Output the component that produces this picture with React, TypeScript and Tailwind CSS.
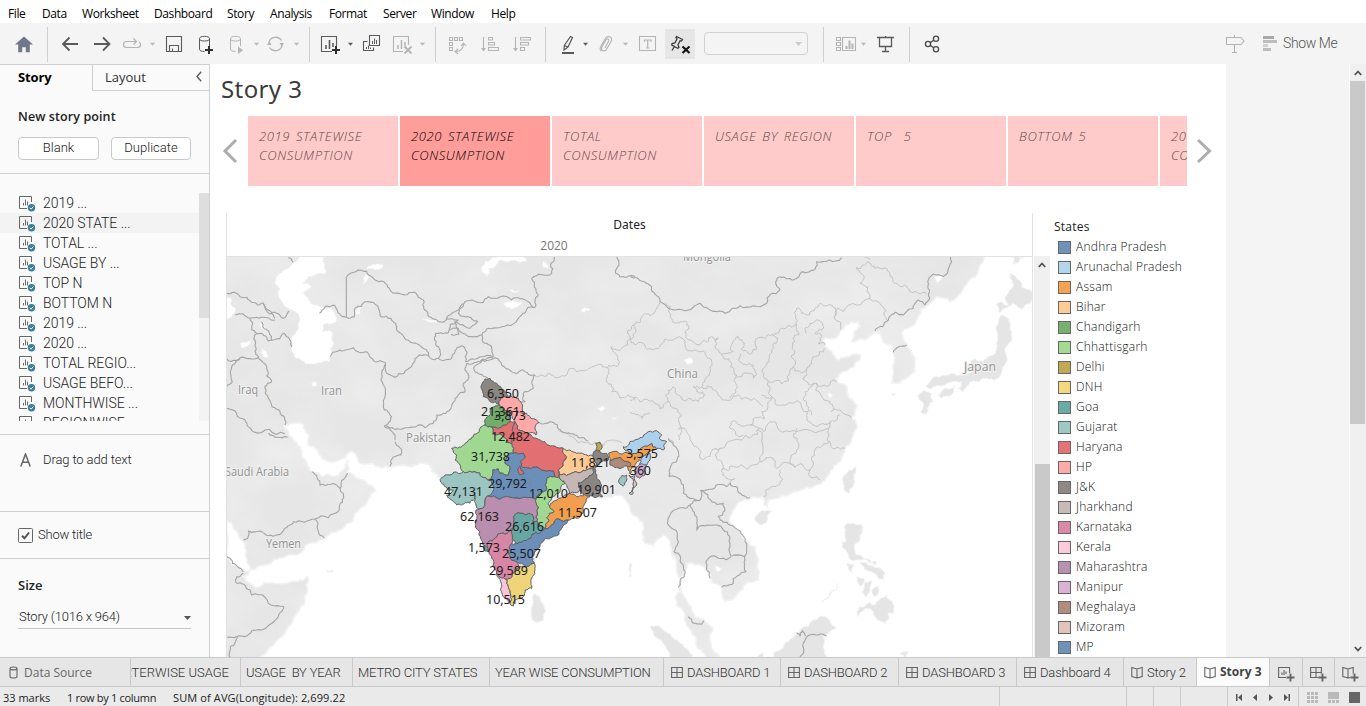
import React from "react";

/* ---------- geometry helpers ---------- */
type Pt = [number, number];

const parse = (s: string, dx = 0, dy = 0): Pt[] =>
  s.trim().split(/\s+/).map((p) => {
    const [x, y] = p.split(",").map(Number);
    return [x + dx, y + dy] as Pt;
  });

const hash = (x: number, y: number) => {
  const v = Math.sin(x * 12.9898 + y * 78.233) * 43758.5453;
  return v - Math.floor(v) - 0.5;
};

// Midpoint displacement; the offset depends only on the segment, so shared edges agree.
const split = (a: Pt, b: Pt, depth: number, amp: number): Pt[] => {
  const len = Math.hypot(b[0] - a[0], b[1] - a[1]);
  if (depth === 0 || len < 7 || len > 250) return [b];
  const flip = a[0] > b[0] || (a[0] === b[0] && a[1] > b[1]);
  const [p, q] = flip ? [b, a] : [a, b];
  const k = hash(p[0] + q[0], p[1] + q[1]) * amp;
  const m: Pt = [(a[0] + b[0]) / 2 - (q[1] - p[1]) * k, (a[1] + b[1]) / 2 + (q[0] - p[0]) * k];
  return [...split(a, m, depth - 1, amp), ...split(m, b, depth - 1, amp)];
};

const trace = (pts: Pt[], close: boolean, amp = 0.5) => {
  const src = close ? [...pts, pts[0]] : pts;
  let out: Pt[] = [src[0]];
  for (let i = 1; i < src.length; i++) out = out.concat(split(src[i - 1], src[i], 3, amp));
  return "M" + out.map((p) => p[0].toFixed(1) + " " + p[1].toFixed(1)).join("L") + (close ? "Z" : "");
};

/* ---------- map data (thirds of a pixel) ---------- */
const E = 1215;
const S = 675;

const ocean: Pt[] = [
  ...parse("0,265 5,272 40,312 60,345 62,380 75,418 90,418 130,402 180,380 240,350 300,325 345,300 385,270 405,235 430,210 452,183 425,160 400,145 365,125 372,115 368,90 355,120 340,137 290,140 260,125 245,95 225,50 205,30 185,-2 178,-12 200,-20 235,-15 240,0 250,45 290,85 330,95 360,85 375,65 390,70 400,95 440,100 495,110 545,108 610,102 620,125 640,140 650,150 680,200 710,222 750,200 755,230 765,300 790,360 820,440 845,510 865,527 885,510 920,470 930,400 925,350 980,300 1040,260 1090,210 1100,195 1130,203 1180,195 1195,200 1205,215", 0, S),
  ...parse("0,235 25,265 40,290 45,340 70,345 100,315 120,345 140,400 140,420 150,480 135,500 140,525 165,560 185,610 200,650 240,700 272,700 250,600 225,575 195,560 175,520 150,475 155,440 170,400 200,405 230,420 245,455 275,475 285,515 325,490 385,450 385,390 375,350 335,310 300,275 310,240 330,215 360,205 400,200 402,225 412,230 415,210 440,205 500,185 560,165 600,125 630,95 645,60 670,15", E, S),
  ...parse("682,665 665,640 675,620 680,600 655,570 650,545 620,520 640,500 690,465 690,450 650,455 625,465 600,435 585,420 583,400 610,400 635,375 665,350 685,350 690,365 670,400 665,410 735,380 750,385 755,400 765,415 785,420 790,445 790,500 785,535 830,520 855,500 855,465 845,440 830,415 815,385 860,345 870,310 920,275 960,290 1000,250 1045,200 1065,145 1230,145", E, 0),
  [E + 1230, S + 730],
  ...parse("80,730 100,682 150,640 190,590 215,550 245,490 248,440 200,455 150,462 90,473 65,455 55,440 75,422 55,420 0,376", 0, S),
];

const lakes = [
  "230,150 300,150 298,185 300,208 275,208 232,235 260,243 235,262 250,285 275,300 320,308 335,345 295,358 292,380 320,378 318,450 312,470 265,477 225,462 200,430 205,390 225,345 190,310 165,250 150,235 165,205 200,180",
  "0,278 20,285 32,315 20,335 0,342",
  "770,185 800,158 900,158 905,168 830,165 790,190 785,215 770,200",
  "835,298 890,290 860,312", "415,235 425,205 430,210 420,235", "425,193 440,180 475,183 450,195",
  "395,315 408,305 406,325 394,328", "593,343 615,345 640,352 612,350", "855,252 882,258 860,260",
  "955,168 970,180 975,195 957,188", "1068,318 1080,308 1095,315 1078,322", "110,430 125,440 130,458 116,455",
  "45,415 78,405 70,420 50,428", "260,535 270,528 276,540 266,545", "105,355 120,365 128,376 112,370",
  "1120,610 1130,602 1140,612 1130,620", "1378,465 1395,458 1405,470 1390,478", "2130,215 2150,210 2148,225 2138,235",
  "1160,638 1180,636 1168,645", "1808,565 1825,570 1815,580", "1470,1080 1490,1092 1480,1100",
];

const islands: Pt[][] = [
  parse("925,490 945,500 962,540 955,570 930,575 918,540", 0, S),
  parse("305,422 325,420 322,426 308,427", 0, S),
  parse("376,260 395,242 427,243 410,275 390,283 375,272", E, S),
  parse("640,155 655,120 678,110 672,150 655,190", E, S),
  parse("652,280 692,282 690,330 672,352 680,375 710,390 740,395 738,405 690,390 665,392 636,350 636,335 648,335", E, S),
  parse("650,402 672,405 665,428", E, S),
  parse("680,440 705,450 690,470", E, S),
  parse("690,398 715,405 765,430 762,455 745,445 725,425", E, S),
  parse("705,455 725,450 720,480 710,500 695,485", E, S),
  parse("725,480 745,470 735,500", E, S),
  parse("683,560 690,530 715,518 735,525 745,510 770,495 788,520 790,550 775,548 765,582 740,570 730,545 710,535", E, S),
  parse("573,517 600,495 625,460 622,475 595,505", E, S),
  parse("500,610 535,590 570,558 618,595 580,620 595,682 580,730 440,730 432,665 465,640", E, S),
  parse("62,588 100,600 140,630 175,660 215,720 130,720 100,640 70,610", E, S),
  parse("380,682 400,668 410,690", E, S),
  parse("810,672 835,665 825,682", E, S),
  parse("1,400 6,405 2,440 -2,440", E, S),
  parse("885,545 920,515 960,507 1000,512 1025,500 1020,470 1035,460 1060,470 1090,450 1100,415 1105,350 1120,330 1140,350 1145,390 1125,430 1125,480 1115,500 1090,525 1060,520 1020,530 1000,562 985,550 995,530 950,535 905,550", E, 0),
  parse("1100,300 1115,290 1135,300 1125,280 1135,265 1145,250 1140,205 1160,220 1205,260 1215,275 1175,312 1150,295 1125,310 1110,325", E, 0),
  parse("862,572 885,558 905,565 910,590 890,628 872,620 880,595", E, 0),
  parse("925,570 940,552 972,542 972,560 935,580", E, 0),
  parse("1148,150 1175,160 1190,152 1165,172 1150,180", E, 0),
  parse("783,567 797,566 790,572", E, 0),
];

const borders: Pt[][] = [
  "5,265 45,275 80,292 115,295 130,315 155,325 175,340 192,318", "115,295 125,318 145,330 150,340",
  "30,330 75,340 130,338 150,345", "75,340 80,375 95,385 130,408 145,405", "110,350 125,375 140,405",
  "95,385 90,420 100,455 125,490 140,530 120,545 130,580 165,620 180,660",
  "5,462 60,458 100,457", "45,462 22,480 22,530 5,545", "5,610 60,645 85,680 180,686",
  "145,405 175,385 185,395 200,425", "190,158 205,172",
  "283,325 300,305 325,300 352,335 388,336", "364,217 425,199 470,228 505,265 570,262 595,285 600,315 612,335 650,352",
  "388,336 390,310 425,290 460,310 465,332 498,340 515,375 550,405 605,435 610,452",
  "315,455 345,435 385,428 425,440 450,470 482,475",
  "482,475 485,505 510,517 560,485 570,460 600,450 640,460 645,435 628,400 632,385 665,385 675,360 700,345 665,340",
  "650,352 680,325 700,315 720,290 775,292 790,275 860,285 910,290 928,308",
  "928,308 890,330 830,365 790,370 770,390 735,395 705,380 690,350 735,370 758,350 730,335 700,325 712,295",
  "640,460 680,460 690,440 710,422 725,440 722,470 770,455 805,455",
  "770,390 780,415 800,425 805,455", "675,375 700,370 702,388 678,388",
  "928,308 940,270 920,220 980,205 988,155", "1175,155 1172,205 1200,217 1230,215",
  "725,475 720,495 730,520 715,535 720,560 690,580 680,605 635,630 625,655 600,668 520,672 482,662",
  "482,475 475,540 478,615 500,635 478,665 510,705", "725,475 770,465 805,460",
  "790,522 750,500 748,485 805,460 830,480 860,500 895,495 930,510 920,530 925,550 895,565 900,590 885,590",
  "945,655 975,650 1010,680 1050,690 1090,708",
].map((s) => parse(s)).concat([
  ...[
    "130,10 155,22 188,22", "260,125 285,165 345,175 355,190 343,240 270,267 205,275 180,295 155,315 110,305 70,303 68,325 55,330",
    "270,267 298,324", "345,175 350,150 368,130", "510,35 530,60 528,75 498,90 495,110",
    "5,380 45,415 55,425", "55,430 35,440 35,460 55,462", "55,462 80,495 150,528 177,530 110,600 80,602 65,618 5,622", "38,622 16,650 16,685",
  ].map((s) => parse(s, 0, S)),
  ...[
    "0,215 40,230 65,245 90,290 210,295 240,315 285,325 330,302 410,295 450,255 437,230 450,215 490,225 520,200 550,195 560,170 635,158",
    "962,155 958,185 940,215 910,207 895,225 898,255 885,300 865,285 850,310 820,330 795,322 775,345 735,378",
    "790,442 800,428 830,420",
  ].map((s) => parse(s, E, 0)),
  ...[
    "115,25 130,45 143,60 140,95 118,120 118,140 145,145 160,165 160,190 190,205 210,210 212,182 230,180 290,170 300,160 320,170 330,190 360,203",
    "210,210 180,225 165,235 120,255 112,280 145,335 132,365 155,400 163,440 145,472",
    "180,225 200,260 200,300 235,285 260,285 280,300 300,345 302,378 345,378",
    "212,182 245,215 280,220 285,240 265,260 300,285 345,335 350,360 345,378",
    "302,382 245,378 228,395 230,420 240,445", "345,378 348,425 310,445 310,460 275,472",
    "175,560 185,568 190,580 215,583 222,572", "500,608 510,618 518,602 528,618", "590,618 538,615 520,670 510,682",
  ].map((s) => parse(s, E, S)),
]);

const provinces: Pt[][] = [
  ...[
    "930,512 975,505 1010,512 1060,500 1100,485 1145,488 1180,480 1175,450 1158,425 1215,402", "1215,402 1225,360",
    "1145,488 1145,520 1160,560 1185,580 1230,587",
  ].map((s) => parse(s)),
  ...[
    "90,290 75,320 40,330 10,360 0,400 40,415 85,430 105,402 165,418 205,440 235,460 240,490 225,530 218,545",
    "105,292 120,325 138,355 170,350 165,380 215,412 245,395 265,400 255,425 275,450 310,440 308,410 325,395 335,430 365,445 405,400 430,390",
    "275,450 300,485 320,510 320,550 300,580", "330,445 325,465 370,480 370,520 320,518",
    "430,390 425,435 410,480 415,530 425,575", "430,390 460,370 500,360 500,310 515,325 555,310 570,295 600,300 612,340 630,375",
    "612,335 622,310 640,320 720,280", "500,360 505,390 488,420 490,485 480,505 415,530",
    "530,385 540,355 560,345 580,370 555,385 575,395 565,415 585,420", "490,485 530,492 555,455 585,430",
    "530,492 518,520 560,535 620,530", "680,185 690,235 715,245 720,270 750,295 770,345",
    "680,190 715,170 735,190 780,210 800,235 840,260 890,268", "705,158 720,162",
    "0,585 35,590 90,612 115,590 115,555 130,545 145,570 205,590 218,560 190,545 225,550 245,545 285,585 335,583 400,605",
    "115,590 135,610 150,660 148,705", "425,575 455,600 535,620 540,650 600,655 630,630",
    "395,570 425,575 395,620 405,640 360,660 305,650 300,670 340,690", "560,535 525,560 530,600 545,630", "560,535 600,590 605,620 665,640",
    "360,660 400,680 440,660 500,680 600,650",
  ].map((s) => parse(s, E, 0)),
  ...[
    "145,0 180,20 210,85 240,80 245,65 275,55 330,30 365,20 385,-5", "115,25 130,40",
    "385,0 390,95 310,110 275,120 278,135 315,145 300,160", "275,55 255,75 275,95 275,120",
    "390,95 430,85 440,115 495,112 500,60 490,20 500,-5", "450,120 435,170 400,200", "495,112 540,120 570,150",
    "540,120 555,60 600,35 595,-5", "600,35 645,55", "0,-55 35,-35 60,-50",
  ].map((s) => parse(s, E, S)),
  parse("1000,0 1040,20 1080,38 1110,38 1160,30 1190,40", 0, S),
];

const states: [string, string][] = [
  ["#8c8683", "155,45 165,27 180,25 200,40 213,52 225,65 232,80 212,85 208,105 195,95 180,95 160,80 158,65"],
  ["#fea9a8", "212,85 232,80 265,85 278,105 275,130 300,140 328,158 315,175 318,195 295,190 265,180 255,155 240,130 220,120 208,105"],
  ["#73ad6c", "195,108 208,105 220,120 240,130 240,155 220,165 195,172 165,165 168,145 180,135 182,118"],
  ["#e26f72", "185,172 195,172 220,165 240,155 255,155 250,185 245,222 230,215 195,195"],
  ["#e26f72", "250,185 255,155 265,180 295,190 330,210 355,225 380,232 400,235 410,260 400,285 385,300 388,320 372,320 370,303 345,302 305,295 275,290 270,275 285,262 280,250 250,250 245,222"],
  ["#a0d891", "65,235 100,225 130,200 150,175 165,165 185,172 195,195 230,215 245,222 250,250 230,258 225,280 240,290 235,315 210,310 205,297 188,300 185,320 172,330 155,320 135,305 100,305 90,285 75,270 80,255"],
  ["#6b8fb8", "230,258 250,250 280,250 285,262 270,275 275,290 305,295 345,302 370,303 372,320 350,325 345,345 350,360 325,375 318,388 290,382 240,385 210,388 172,378 180,360 190,350 185,330 185,320 188,300 205,297 210,310 235,315 240,290 225,280"],
  ["#e26f72", "270,288 283,310 270,315 265,305"],
  ["#9ac5c1", "33,325 45,315 100,305 135,305 155,320 172,330 185,330 190,350 172,378 165,395 158,415 145,418 135,390 135,370 120,400 95,405 70,395 50,375 70,360 45,350"],
  ["#b98eae", "172,378 210,388 290,382 318,388 325,410 318,440 322,455 310,455 300,430 265,428 250,440 247,475 215,490 175,515 172,530 160,525 150,485 138,420 158,415 165,395"],
  ["#67a7a2", "160,528 172,530 177,545 165,543"],
  ["#67a7a2", "250,440 265,428 300,430 310,455 322,455 345,475 330,490 290,512 255,522 247,505 247,475"],
  ["#a0d891", "372,320 388,320 405,340 390,365 370,380 355,400 372,425 358,430 355,455 345,475 322,455 318,440 325,410 318,388 325,375 350,360 345,345 350,325"],
  ["#f19f4e", "390,385 430,372 445,380 475,372 480,380 465,400 460,425 430,445 415,450 365,465 345,475 355,455 358,430 372,425 360,405"],
  ["#6b8fb8", "245,520 255,522 290,512 330,490 345,475 365,465 415,450 395,475 370,500 330,530 315,545 313,580 290,590 265,578 250,572 240,560 238,530"],
  ["#d886a5", "175,515 215,490 247,475 247,505 245,520 238,530 240,560 250,572 265,578 270,590 250,608 230,628 200,608 185,565 177,545 172,530"],
  ["#f7c5d7", "200,608 230,628 235,650 242,675 240,700 225,685 215,650"],
  ["#f0d479", "230,628 250,608 270,590 290,590 313,580 315,600 303,640 305,655 285,660 280,680 250,708 240,700 242,675 235,650"],
  ["#ffca94", "400,235 420,240 440,250 475,258 500,262 500,290 470,300 430,308 388,312 385,300 400,285 410,260"],
  ["#c4b7b4", "388,312 430,308 470,300 490,292 490,310 465,328 445,338 450,360 440,368 415,372 405,340 388,320"],
  ["#8c8683", "498,242 530,250 535,270 515,275 503,285 497,310 515,345 518,380 500,382 475,378 450,360 445,338 465,328 490,310 490,292 500,285"],
  ["#bfa84d", "497,220 510,216 513,238 498,242"],
  ["#f19f4e", "535,250 600,250 640,230 665,220 680,235 650,250 630,265 615,290 600,312 595,300 600,278 540,272"],
  ["#ae8a7b", "540,272 600,278 600,290 560,292 540,285"],
  ["#add1ec", "580,230 600,215 640,200 655,185 680,182 695,195 688,205 710,215 700,240 680,235 665,220 640,230 600,250 585,240"],
  ["#add1ec", "660,250 655,275 640,290 628,285 635,265"],
  ["#d2a9cf", "620,290 650,285 645,315 630,325 617,312"],
  ["#9ac5c1", "567,328 590,315 590,330 580,348 568,340"],
  ["#dfc2b7", "597,315 615,318 620,340 608,372 597,370"],
];

const marks: [string, number, number, number][] = [
  ["6,350", 487, 398, 32], ["21,361", 481, 416, 39], ["3,873", 494, 420, 32], ["12,482", 491, 441, 39],
  ["31,738", 471, 461, 39], ["29,792", 488, 488, 39], ["11,821", 571, 467, 39], ["3,575", 626, 458, 32],
  ["360", 630, 475, 21], ["47,131", 444, 496, 39], ["12,010", 529, 498, 39], ["19,901", 577, 494, 39],
  ["62,163", 460, 521, 39], ["11,507", 558, 517, 39], ["26,616", 505, 531, 39], ["1,573", 468, 552, 32],
  ["25,507", 502, 558, 39], ["29,589", 489, 575, 39], ["10,515", 486, 604, 39],
];

const places: [string, number, number, number][] = [
  ["Iraq", 238, 394, 20], ["Iran", 321, 395, 21], ["Pakistan", 406, 442, 45], ["Saudi Arabia", 225, 476, 64],
  ["Yemen", 266, 548, 35], ["China", 667, 378, 31], ["Japan", 964, 371, 32], ["Mongolia", 683, 261, 48], ["India", 508, 486, 24],
];

function WorldMap() {
  return (
    <svg className="block h-[400px] w-[805px]" viewBox="227 257 805 400">
      <defs>
        <filter id="relief" x="0" y="0" width="100%" height="100%">
          <feTurbulence type="fractalNoise" baseFrequency="0.012 0.018" numOctaves="4" seed="8" />
          <feColorMatrix values="0 0 0 0 1  0 0 0 0 1  0 0 0 0 1  0 1.5 0 0 -0.55" />
        </filter>
      </defs>
      <rect x="227" y="257" width="805" height="400" fill="#e6e6e6" />
      <rect x="227" y="257" width="805" height="400" filter="url(#relief)" opacity="0.4" />
      <g transform="translate(225 205) scale(0.33333)">
        <path d={trace(ocean, true, 0.35)} fill="#fff" stroke="#f2f2f2" strokeWidth="5" />
        {lakes.map((s, i) => <path key={i} d={trace(parse(s), true, 0.4)} fill="#fff" stroke="#f3f3f3" strokeWidth="2" />)}
        {islands.map((p, i) => <path key={i} d={trace(p, true, 0.4)} fill="#e5e5e5" stroke="#f3f3f3" strokeWidth="3" />)}
        <g fill="none" stroke="#bdbdbd" strokeWidth="2.6">
          {provinces.map((p, i) => <path key={i} d={trace(p, false, 0.65)} />)}
        </g>
        <g fill="none" stroke="#a3a3a3" strokeWidth="3.2" strokeLinejoin="round">
          <path d="M364 336V217" />
          {borders.map((p, i) => <path key={i} d={trace(p, false, 0.4)} />)}
        </g>
      </g>
      <g transform="translate(430 370) scale(0.33333)" stroke="#5c6063" strokeWidth="3" strokeLinejoin="round">
        {states.map(([c, s], i) => <path key={i} d={trace(parse(s), true, 0.45)} fill={c} />)}
      </g>
      <g fontFamily="'Open Sans', sans-serif" fontSize="12">
        {places.map(([t, x, y, w]) => (
          <text key={t} x={x} y={y} textLength={w} lengthAdjust="spacingAndGlyphs" fill={t === "India" ? "#68809f" : "#929292"} stroke={t === "India" ? "none" : "#f0f0f0"} strokeWidth="2" paintOrder="stroke" opacity={t === "India" ? 0.35 : 1}>{t}</text>
        ))}
      </g>
      <g fontFamily="'Noto Sans', sans-serif" fontSize="12.5" fill="#1c1c1c">
        {marks.map(([t, x, y, w]) => <text key={t} x={x} y={y} textLength={w}>{t}</text>)}
      </g>
    </svg>
  );
}

/* ---------- toolbar ---------- */
const DK = "#5a5a5a";
const LT = "#b4b4b4";

function Slot({ x, to, children }: { x: number; to: number; children?: React.ReactNode }) {
  return (
    <svg className="block shrink-0" width={to - x} height={41} viewBox={`${x} 23 ${to - x} 41`} fill="none">
      {children}
    </svg>
  );
}
const Rule = () => <div className="my-1 h-[35px] w-px shrink-0 self-start bg-[#d0d0d0]" />;
const Caret = ({ x, c = LT }: { x: number; c?: string }) => <path d={`M${x - 2.5} 42.7h5l-2.5 3z`} fill={c} />;
const Cylinder = ({ x, c }: { x: number; c: string }) => (
  <g stroke={c}>
    <ellipse cx={x + 5} cy="38.7" rx="5" ry="2.3" />
    <path d={`M${x} 38.7v10.5c0 1.6 2 2.3 5 2.3M${x + 10} 38.7v7.5`} />
  </g>
);

function Toolbar() {
  return (
    <div className="flex h-[41px] shrink-0 bg-[#f4f4f4]">
      <Slot x={0} to={47}>
        <path d="M24 36.5l9 8h-3.2v7.7h-4v-5h-3.6v5h-4v-7.7H15z" fill="#6d7a89" />
      </Slot>
      <Rule />
      <Slot x={48} to={309}>
        <g stroke={DK} strokeWidth="1.8">
          <path d="M78 44H63.500M69.500 37.500L63 44l6.500 6.500" />
          <path d="M94 44h14.500M103 37.500l6.500 6.500-6.500 6.500" />
        </g>
        <path d="M136 41.500h-9.500a3 3 0 0 0 0 6h11a3 3 0 0 0 3-3c0-1.200-.5-2-1.500-2.500M133.500 38.500l3 3-3 3" stroke={LT} strokeWidth="1.2" />
        <Caret x={152.500} />
        <path d="M166.500 36.500h15v15h-15zM169.500 51v-5.500h9V51M172.500 51v-2.500" stroke={DK} strokeWidth="1.1" />
        <Cylinder x={199.500} c={DK} />
        <path d="M209 46v8M205 50h8" stroke="#2f2f2f" strokeWidth="2" />
        <Cylinder x={230.500} c={LT} />
        <path d="M238 46.500l5 3.700-5 3.700z" fill={LT} />
        <Caret x={256.500} />
        <path d="M269 42a7 7 0 0 1 12.500-1.500M282 46a7 7 0 0 1-12.500 1.500" stroke={LT} strokeWidth="1.3" />
        <path d="M267 45h4.500l-2.200-4zM279.500 43h4.500l-2.200 4z" fill={LT} />
        <Caret x={296.500} />
      </Slot>
      <Rule />
      <Slot x={310} to={435}>
        <path d="M332 51.500h-10.500v-15h15V46" stroke={DK} strokeWidth="1.1" />
        <path d="M326 45v4M329.500 40v9M333 43v4" stroke={DK} strokeWidth="1.6" />
        <path d="M336 46v8M332 50h8" stroke="#2f2f2f" strokeWidth="2" />
        <Caret x={350.500} c={DK} />
        <path d="M369.500 35.500h10v10h-10zM367.500 41.500h-4v9h10v-3" stroke={DK} strokeWidth="1.1" />
        <path d="M372.500 41v3M374.500 38.500V44M376.500 40v4M366.500 47v2M368.500 45.500V49M370.500 47.500V49" stroke={DK} />
        <path d="M403 51.500h-9.500v-15h15V45" stroke={LT} strokeWidth="1.1" />
        <path d="M398 45v4M401.500 40v9M405 42v4" stroke={LT} strokeWidth="1.5" />
        <path d="M404.500 46.500l7 7M411.500 46.500l-7 7" stroke={LT} strokeWidth="1.9" />
        <Caret x={422.500} />
      </Slot>
      <Rule />
      <Slot x={436} to={545}>
        <g stroke={LT} strokeWidth="1.1">
          <path d="M449.500 37.500h3v3h-3zM454.500 37.500h3v3h-3zM459.500 37.500h3v3h-3zM449.500 42.500h3v3h-3zM449.500 47.500h3v3h-3zM463.500 43.500c0 5-3 8-8 8M461 46l2.500-3 2.500 3M458 49l-3 2.500 3 2.500" />
          <path d="M483.500 37v13M488.500 37.500h4v2.500h-4zM488.500 42.500h6v2.500h-6zM488.500 47.500h10v3h-10z" />
          <path d="M515.500 37v13M520.500 37.500h10v2.500h-10zM520.500 42.500h8v2.500h-8zM520.500 47.500h4v3h-4z" />
        </g>
        <path d="M481 48h5l-2.500 3.500zM513 48h5l-2.500 3.500z" fill={LT} />
      </Slot>
      <Rule />
      <Slot x={546} to={665}>
        <path d="M570.500 36.500l2 1-4.500 9.500-4 3 .300-4.500zM564.300 45.500l3.700 1.500" stroke={DK} strokeWidth="1.2" />
        <path d="M562 53h12" stroke={DK} strokeWidth="2" />
        <Caret x={585.500} c={DK} />
        <path d="M601 46l4-7c1-2 3-3 5-2s2 2.800 1 4.500l-4.500 8c-.8 1.400-2.500 1.800-3.800 1s-1.500-2.300-.7-3.700l4-7c.5-.9 1.500-1.200 2.200-.8s.9 1.300.4 2.200L605 48M601 46c-1.500 2.500-1 4.500.5 5" stroke={LT} strokeWidth="1.1" />
        <Caret x={625.500} />
        <path d="M639.500 36.500h16v14h-16z" stroke={LT} strokeWidth="1.1" />
        <path d="M644.500 42v-2h6.500v2M647.700 40v8M646 48h3.500" stroke={LT} strokeWidth="1.2" />
      </Slot>
      <div className="mt-1.5 h-[30px] w-[30px] shrink-0 overflow-hidden bg-[#e6e6e6]">
        <svg width={30} height={30} viewBox="665 29 30 30" fill="none">
          <path d="M676.500 36.500l6 3-1 1.500-1.500-.3-2 4 1 2.800-1.200.8-6-3.200.2-1.500 3-.7 2-4-1-1.200zM674.800 45.800l-2.800 4.700" stroke="#3f3f3f" strokeWidth="1.3" />
          <path d="M682.500 46.500l7 6.500M689.500 46.500l-7 6.500" stroke="#151515" strokeWidth="2.2" />
        </svg>
      </div>
      <div className="mt-[9px] ml-[9px] flex h-[23px] w-[104px] shrink-0 items-center justify-end rounded-sm border border-[#d2d2d2] pr-[5px]">
        <svg width={7} height={4} viewBox="0 0 7 4"><path d="M0 0h7L3.500 4z" fill="#cbcbcb" /></svg>
      </div>
      <div className="w-[15px] shrink-0" />
      <Rule />
      <Slot x={824} to={909}>
        <path d="M836.500 37.500h4v3h-4zM836.500 42.500h4v3h-4zM836.500 47.500h4v3h-4zM842.500 37.500h13v13h-13z" stroke={LT} strokeWidth="1.1" />
        <path d="M846.500 46v3M849.500 40.500V49M852.500 43.500V49" stroke={LT} strokeWidth="2" />
        <Caret x={863.500} />
        <path d="M877 37.500h17M885.500 36v1.500M879.500 38v8.500h12V38M885.500 47v4.500M882 51.500h7" stroke={DK} strokeWidth="1.3" />
      </Slot>
      <Rule />
      <Slot x={910} to={960}>
        <g stroke="#4a4a4a" strokeWidth="1.3">
          <circle cx="928" cy="44" r="2.600" /><circle cx="936" cy="38.800" r="2.600" /><circle cx="936" cy="49.200" r="2.600" />
          <path d="M930.200 42.600l3.600-2.400M930.200 45.400l3.600 2.400" />
        </g>
      </Slot>
      <div className="grow" />
      <Slot x={1220} to={1283}>
        <path d="M1226.500 37.500h14.500l3 3.500-3 3.500h-14.500zM1234.500 35v2.500M1234.500 44.500v8M1232 52.500h5" stroke={LT} strokeWidth="1.1" />
        <path d="M1263 36h11v3h-11z" fill="#a8a8a8" /><path d="M1263 40h14v3h-14zM1263 48h8v3h-8z" fill="#bdbdbd" /><path d="M1263 44h5v3h-5z" fill="#d0d0d0" />
      </Slot>
      <span className="w-[83px] shrink-0 pt-[10px] font-[Roboto] text-[14px] leading-[20px] font-light tracking-[-0.4px] text-[#555]">Show Me</span>
    </div>
  );
}

/* ---------- sidebar ---------- */
function SheetIcon() {
  return (
    <svg className="mt-[2px] mr-[7px] shrink-0" width={17} height={17} viewBox="0 0 17 17" fill="none">
      <path d="M8 13.500H.5V1.500h12V7" stroke="#666" />
      <path d="M4.500 8v2.500M6.500 4.500v6M8.500 6.500v4" stroke="#666" />
      <circle cx="12.500" cy="12.800" r="3.700" fill="#3b7d9b" />
      <path d="M10.800 12.800l1.300 1.300 2.200-2.500" stroke="#fff" />
    </svg>
  );
}

const sheets = ["2019 ...", "2020 STATE ...", "TOTAL ...", "USAGE BY ...", "TOP N", "BOTTOM N", "2019 ...", "2020 ...", "TOTAL REGIO...", "USAGE BEFO...", "MONTHWISE ...", "REGIONWISE"];

function Sidebar() {
  return (
    <aside className="flex w-[210px] shrink-0 flex-col border-t border-r border-[#cfcfcf] bg-[#fafafa] font-[Roboto] text-[#333]">
      <div className="flex h-[26px] shrink-0 text-[14px] leading-[25px]">
        <div className="w-[92px] pl-[18px] font-['Open_Sans'] text-[13px] font-bold tracking-[-0.1px] text-black">Story</div>
        <div className="flex grow items-start border-b border-l border-[#cfcfcf] pl-3 font-['Open_Sans'] text-[13px]">
          <span className="grow">Layout</span>
          <svg className="mt-[6px] mr-[7px]" width={6} height={11} viewBox="0 0 6 11" fill="none"><path d="M5.200.8L1 5.500l4.200 4.700" stroke="#555" strokeWidth="1.300" /></svg>
        </div>
      </div>
      <div className="h-[83px] shrink-0 border-b border-[#cfcfcf] px-[18px] pt-4">
        <div className="font-['Open_Sans'] text-[12.5px] leading-5 font-semibold tracking-[0.1px] text-[#222]">New story point</div>
        <div className="mt-[10px] flex gap-3 text-center text-[13px] leading-[20px] font-light text-[#222]">
          <div className="h-[23px] w-[81px] rounded-sm border border-[#c9c9c9] bg-white">Blank</div>
          <div className="h-[23px] w-[80px] shrink-0 rounded-sm border border-[#c9c9c9] bg-white">Duplicate</div>
        </div>
      </div>
      <div className="mt-[19px] flex h-[228px] shrink-0 overflow-hidden">
        <div className="w-[199px] text-[14px] leading-5 font-light">
          {sheets.map((s, i) => (
            <div key={i} className={"flex h-5 pl-[19px] " + (i === 1 ? "bg-[#f3f3f3]" : "")}>
              <SheetIcon />
              <span className="tracking-[-0.05px] text-[#222]">{s}</span>
            </div>
          ))}
        </div>
        <div className="w-[10px] bg-[#f3f3f3]"><div className="h-[125px] bg-[#dedede]" /></div>
      </div>
      <div className="mt-[13px] flex h-[78px] shrink-0 border-y border-[#cfcfcf] pt-[15px] pl-5">
        <svg className="mt-[3px] mr-3" width={11} height={14} viewBox="0 0 11 14" fill="none"><path d="M.8 13.500L5.500 1l4.700 12.500M2.300 9.300h6.400" stroke="#666" strokeWidth="1.500" /></svg>
        <span className="text-[13px] leading-5 font-light tracking-[-0.12px] text-[#222]">Drag to add text</span>
      </div>
      <div className="flex h-[47px] shrink-0 items-center gap-[5px] border-b border-[#cfcfcf] pl-[18px]">
        <svg width={15} height={15} viewBox="0 0 15 15" fill="none"><rect x=".5" y=".5" width="14" height="14" rx="1" stroke="#666" /><path d="M4 7.800l2.500 2.500L11 4.500" stroke="#555" strokeWidth="2" /></svg>
        <span className="text-[13px] font-light tracking-[-0.2px] text-[#222]">Show title</span>
      </div>
      <div className="px-[18px] pt-4">
        <div className="font-['Open_Sans'] text-[13px] leading-5 font-semibold text-[#222]">Size</div>
        <div className="mt-3 flex h-[22px] items-center justify-between border-b border-[#c6c6c6] pl-px text-[13px] font-light tracking-[-0.2px] text-[#222]">
          <span className="-mt-0.5">Story (1016 x 964)</span>
          <svg width={7} height={4} viewBox="0 0 7 4"><path d="M0 0h7L3.500 4z" fill="#555" /></svg>
        </div>
      </div>
    </aside>
  );
}

/* ---------- story ---------- */
const points = ["2019 STATEWISE CONSUMPTION", "2020 STATEWISE CONSUMPTION", "TOTAL CONSUMPTION", "USAGE BY REGION", "TOP  5", "BOTTOM 5", "2019 CONSUMPTION"];

const legend: [string, string][] = [
  ["Andhra Pradesh", "#7092b8"], ["Arunachal Pradesh", "#b3d4ed"], ["Assam", "#f4a352"], ["Bihar", "#ffcc97"], ["Chandigarh", "#77b06f"],
  ["Chhattisgarh", "#a3db94"], ["Delhi", "#c2aa52"], ["DNH", "#f4d880"], ["Goa", "#6baaa5"], ["Gujarat", "#9ec8c4"], ["Haryana", "#e57376"],
  ["HP", "#ffaaa9"], ["J&K", "#8f8885"], ["Jharkhand", "#c8bab7"], ["Karnataka", "#da8aa8"], ["Kerala", "#fbcbdb"], ["Maharashtra", "#bb91b1"],
  ["Manipur", "#d9b2d6"], ["Meghalaya", "#b18d7e"], ["Mizoram", "#e0c4b9"], ["MP", "#7092b8"],
];

const Chevron = ({ down = false }: { down?: boolean }) => (
  <svg width={8} height={6} viewBox="0 0 8 6" fill="none"><path d={down ? "M.8 1L4 4.500 7.200 1" : "M.8 5L4 1.500 7.200 5"} stroke="#505050" strokeWidth="1.800" /></svg>
);

function Story() {
  return (
    <main className="flex w-[1016px] shrink-0 flex-col overflow-hidden bg-white">
      <h1 className="pt-[8px] pb-px pl-[11px] font-['Noto_Sans'] text-[24px] leading-[34px] tracking-[0.4px] text-[#3a3a3a]">Story 3</h1>
      <div className="mt-[9px] flex h-[70px] shrink-0 items-center">
        <svg className="mr-[10px] ml-[12px] shrink-0" width={16} height={26} viewBox="0 0 16 26" fill="none"><path d="M14 2L3 13l11 11" stroke="#adadad" strokeWidth="3" /></svg>
        <div className="flex h-[70px] w-[939px] shrink-0 gap-[2px] overflow-hidden">
          {points.map((p, i) => (
            <div key={p} className={"h-[70px] w-[150px] shrink-0 pt-[11px] pl-[11px] font-['Open_Sans'] text-[13px] leading-[19px] font-light tracking-[0.6px] whitespace-pre italic [word-spacing:2px] " + (i === 1 ? "bg-[#ff9d9a] text-black" : "bg-[#ffcbca] text-[#644746]")}>
              {p.replace(" CONSUMPTION", "\nCONSUMPTION")}
            </div>
          ))}
        </div>
        <svg className="ml-[9px] shrink-0" width={17} height={26} viewBox="0 0 17 26" fill="none"><path d="M2 2l11.500 11L2 24" stroke="#adadad" strokeWidth="3" /></svg>
      </div>
      <div className="mt-[27px] flex min-h-0 grow">
        <div className="ml-4 flex w-[807px] shrink-0 flex-col border-x border-[#e2e2e2]">
          <div className="flex h-[44px] shrink-0 flex-col border-b border-[#e2e2e2] font-['Noto_Sans'] text-[12px]">
            <div className="pt-px text-center leading-[22px] text-[#222]">Dates</div>
            <div className="w-[654px] text-center font-['Open_Sans'] leading-[19px] text-[#777]">2020</div>
          </div>
          <WorldMap />
        </div>
        <div className="mt-[43px] ml-px flex w-4 shrink-0 flex-col items-center bg-[#f0f0f0] pt-[6px]">
          <Chevron />
          <div className="mt-[196px] w-[15px] grow bg-[#c9c9c9]" />
        </div>
        <div className="ml-1 pt-1 font-['Open_Sans'] text-[12px] font-light tracking-[0.25px] text-[#111]">
          <div className="h-5 leading-5 font-medium text-[#222]">States</div>
          {legend.map(([n, c]) => (
            <div key={n} className="flex h-5 items-center gap-[5px] pl-1">
              <svg width={13} height={13}><rect x=".5" y=".5" width="12" height="12" fill={c} stroke="#666" /></svg>
              <span>{n}</span>
            </div>
          ))}
        </div>
      </div>
    </main>
  );
}

/* ---------- bottom ---------- */
function TabIcon({ kind, plus = false }: { kind: "dash" | "book" | "db" | "sheet"; plus?: boolean }) {
  return (
    <svg className="shrink-0" width={plus ? 17 : 12} height={plus ? 16 : 13} viewBox={plus ? "0 0 17 16" : "0 0 12 13"} fill="none" stroke="#666" strokeWidth="1.100">
      {kind === "dash" && <path d="M.6 1.500h10.800v10H.6zM6 1.500v10M.6 6.500h10.800" />}
      {kind === "book" && <path d="M6 3L.8 1.500v9L6 12l5.200-1.500v-9zM6 3v9" />}
      {kind === "db" && <path d="M2 2.500c0-2 7-2 7 0v8c0 2-7 2-7 0zM2 2.500c0 1.800 7 1.800 7 0" />}
      {kind === "sheet" && <path d="M8 11.500H.6v-10h11V7M4 6.500V9M6 4v5M8 5.500V8" />}
      {plus && <path d="M12.500 7.500v8M8.500 11.500h8" stroke="#e6e6e6" strokeWidth="4" />}
      {plus && <path d="M12.500 7.500v8M8.500 11.500h8" strokeWidth="1.900" />}
    </svg>
  );
}

const tabs: { w: number; t: string; k?: "dash" | "book" }[] = [
  { w: 112, t: "USAGE  BY YEAR" }, { w: 137, t: "METRO CITY STATES" }, { w: 174, t: "YEAR WISE CONSUMPTION" },
  { w: 117, t: "DASHBOARD 1", k: "dash" }, { w: 118, t: "DASHBOARD 2", k: "dash" }, { w: 118, t: "DASHBOARD 3", k: "dash" },
  { w: 107, t: "Dashboard 4", k: "dash" }, { w: 73, t: "Story 2", k: "book" },
];

function Bottom() {
  return (
    <footer className="shrink-0 font-[Roboto]">
      <div className="flex h-[30px] border-y border-[#c9c9c9] bg-[#e6e6e6] text-[13px] font-light text-[#333]">
        <div className="flex w-[131px] shrink-0 items-center gap-1 border-r border-[#c9c9c9] pl-2"><TabIcon kind="db" /><span className="pt-0.5 font-['Open_Sans'] text-[12px] font-normal text-[#666]">Data Source</span></div>
        <div className="flex w-[110px] shrink-0 items-center justify-end overflow-hidden border-r border-[#c9c9c9] pt-0.5 pr-[11px] whitespace-nowrap">QUARTERWISE USAGE</div>
        {tabs.map((t) => (
          <div key={t.t} style={{ width: t.w }} className={"flex shrink-0 items-center gap-1 border-r border-[#c9c9c9] whitespace-pre " + (t.k ? "pl-[7px]" : "pl-[5px]")}>
            {t.k && <TabIcon kind={t.k} />}
            <span className="pt-0.5 tracking-[-0.18px]">{t.t}</span>
          </div>
        ))}
        <div className="flex w-[73px] shrink-0 items-center gap-1 border-r border-[#c9c9c9] bg-[#fbfbfb] pl-[7px] font-['Open_Sans'] text-[12px] font-bold text-[#444]"><TabIcon kind="book" /><span>Story 3</span></div>
        <div className="flex w-[33px] shrink-0 items-center justify-end border-r border-[#c9c9c9] pt-[3px] pr-[7px]"><TabIcon kind="sheet" plus /></div>
        <div className="flex w-8 shrink-0 items-center justify-end border-r border-[#c9c9c9] pt-[3px] pr-[7px]"><TabIcon kind="dash" plus /></div>
        <div className="flex w-8 shrink-0 items-center justify-end border-r border-[#c9c9c9] pt-[3px] pr-[7px]"><TabIcon kind="book" plus /></div>
      </div>
      <div className="flex h-[19px] bg-[#eaeaea] font-['Open_Sans'] text-[11px] leading-[21px] text-[#222]">
        <span className="w-16 pl-[3px]">33 marks</span>
        <span className="w-[106px] pl-[3px] tracking-[-0.3px]">1 row by 1 column</span>
        <span className="w-[830px] border-r border-[#c9c9c9] pl-[3px] tracking-[0.12px]">SUM of AVG(Longitude): 2,699.22</span>
        <span className="w-[127px] border-r border-[#c9c9c9]" />
        <span className="w-[27px] border-r border-[#c9c9c9]" />
        <span className="w-[27px] border-r border-[#c9c9c9]" />
        <span className="w-[47px] border-r border-[#c9c9c9]" />
        <svg width={138} height={19} viewBox="1228 687 138 19" fill="#555">
          <path d="M1236 694h1.500v7h-1.500zM1242 694v7l-4-3.500zM1257 694v7l-4-3.500zM1269 694v7l4-3.500zM1284 694v7l4-3.500zM1288.500 694h1.500v7h-1.500z" />
          <path d="M1298 687h1v19h-1z" fill="#c9c9c9" />
          <path d="M1307 692h3v3h-3zM1311 692h3v3h-3zM1315 692h3v3h-3zM1307 696h3v3h-3zM1311 696h3v3h-3zM1315 696h3v3h-3zM1307 700h3v3h-3zM1311 700h3v3h-3zM1315 700h3v3h-3zM1328 692h11v7h-11zM1328 700h3v3h-3zM1332 700h3v3h-3zM1336 700h3v3h-3z" fill="#b9b9b9" />
          <path d="M1349 692h11v11h-11z" fill="#666" />
        </svg>
      </div>
    </footer>
  );
}

const menu: [string, number][] = [["File", 34], ["Data", 40], ["Worksheet", 72], ["Dashboard", 73], ["Story", 43], ["Analysis", 59], ["Format", 54], ["Server", 48], ["Window", 60], ["Help", 40]];

export default function App() {
  return (
    <div className="flex h-[706px] w-[1366px] flex-col overflow-hidden bg-white">
      <nav className="flex h-[23px] shrink-0 pl-2 font-['Open_Sans'] text-[12px] leading-[28px] tracking-[-0.4px] text-black">
        {menu.map(([m, w]) => <span key={m} className="shrink-0" style={{ width: w }}>{m}</span>)}
      </nav>
      <Toolbar />
      <div className="flex h-[593px] shrink-0">
        <Sidebar />
        <Story />
        <div className="w-[123px] bg-[#f4f4f4]" />
        <div className="ml-px flex w-4 shrink-0 flex-col items-center bg-[#f0f0f0] pt-[6px]">
          <Chevron />
          <div className="mt-[5px] h-[343px] w-[15px] self-start bg-[#c9c9c9]" />
          <div className="grow" />
          <div className="pb-[5px]"><Chevron down /></div>
        </div>
      </div>
      <Bottom />
    </div>
  );
}
